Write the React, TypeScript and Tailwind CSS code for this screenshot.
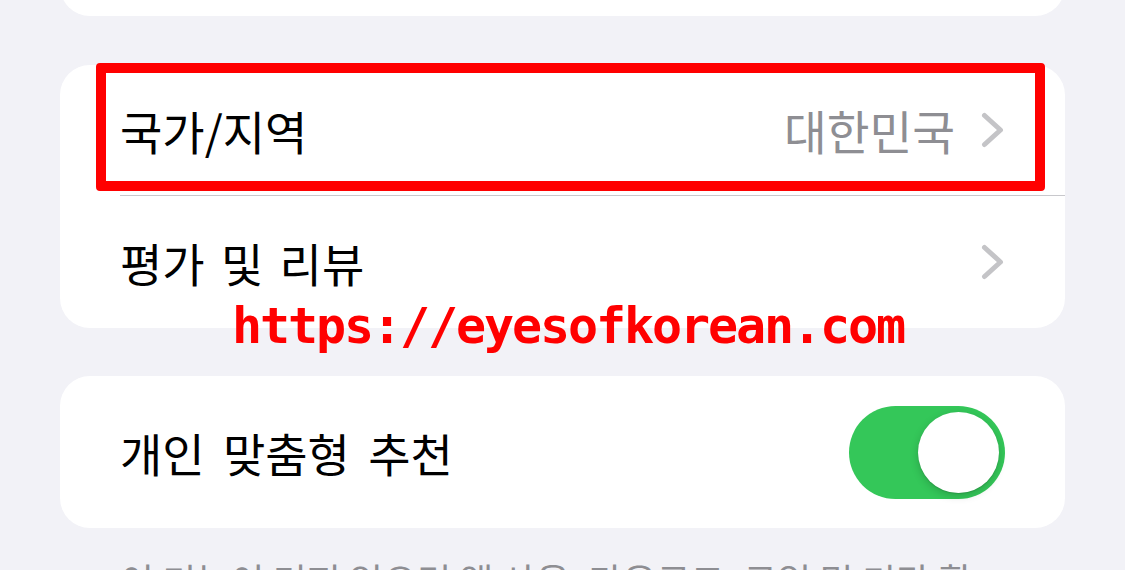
import React from 'react';

const font = { fontFamily: '"Noto Sans CJK KR", "Noto Sans", sans-serif' };

function Chevron() {
  return (
    <svg width="24" height="36" viewBox="0 0 24 36" className="shrink-0">
      <path d="M3.5 3.5 L19.5 18 L3.5 32.5" fill="none" stroke="#c4c4c7" strokeWidth="5" strokeLinecap="round" strokeLinejoin="round" />
    </svg>
  );
}

function Toggle() {
  return (
    <div className="flex h-[93px] w-[156px] shrink-0 items-center justify-end rounded-full bg-[#34c759] pr-[6px]">
      <div className="h-[81px] w-[81px] rounded-full bg-white shadow-[0_3px_8px_rgba(0,0,0,0.18),0_1px_1px_rgba(0,0,0,0.12)]" />
    </div>
  );
}

export default function App() {
  return (
    <div className="h-[570px] w-[1125px] overflow-hidden bg-[#f2f2f7] px-[60px]" style={font}>
      <div className="mt-[-100px] h-[116px] rounded-[30px] bg-white" />

      <div className="relative mt-[49px] rounded-[30px] bg-white">
        <div className="flex h-[130px] items-center justify-between px-[60px]">
          <span className="text-[46px] leading-none text-black">국가/지역</span>
          <div className="flex items-center gap-[26px]">
            <span className="text-[46.5px] leading-none text-[#8e8e93]">대한민국</span>
            <Chevron />
          </div>
        </div>
        <div className="ml-[60px] h-px bg-[#c8c8cc]" />
        <div className="flex h-[132px] items-center justify-between px-[60px]">
          <span className="text-[46px] leading-none text-black [word-spacing:6px]">평가 및 리뷰</span>
          <Chevron />
        </div>

        <div className="pointer-events-none absolute left-[36px] top-[-2px] h-[128px] w-[949px] rounded-[4px] border-[10px] border-[#ff0000]" />
        <div
          className="pointer-events-none absolute left-[172px] top-[236px] text-[50px] font-bold leading-none tracking-[-2.1px] text-[#ff0000]"
          style={{ fontFamily: '"DejaVu Sans Mono", monospace' }}
        >
          https://eyesofkorean.com
        </div>
      </div>

      <div className="mt-[48px] flex h-[152px] items-center justify-between rounded-[30px] bg-white px-[60px]">
        <span className="text-[46px] leading-none text-black [word-spacing:8px]">개인 맞춤형 추천</span>
        <Toggle />
      </div>

      <p className="mt-[30px] w-[945px] break-all pl-[60px] text-[37px] leading-[44px] text-[#8e8e93]">
        이 기능이 켜져 있으면 앱 사용, 다운로드, 구입 및 기타 활동을 기반으로 맞춤형 추천을 제공합니다.
      </p>
    </div>
  );
}
